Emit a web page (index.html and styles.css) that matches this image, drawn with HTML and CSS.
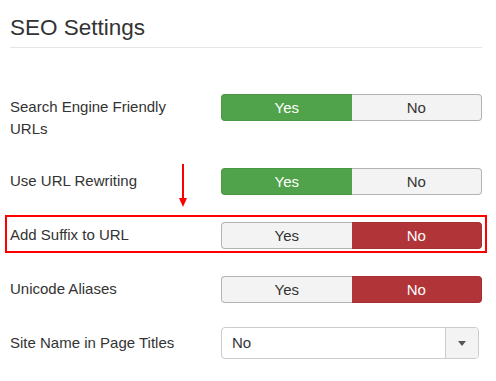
FILE: index.html
```html
<!DOCTYPE html>
<html lang="en">
<head>
    <meta charset="UTF-8">
    <title>SEO Settings</title>
    <link rel="stylesheet" href="styles.css">
</head>
<body>
    <div class="container">
        <h2 class="title">SEO Settings</h2>

        <div class="row row-first">
            <div class="label">Search Engine Friendly URLs</div>
            <div class="toggle">
                <span class="seg yes active">Yes</span>
                <span class="seg no">No</span>
            </div>
        </div>

        <div class="row">
            <div class="label">Use URL Rewriting</div>
            <div class="toggle">
                <span class="seg yes active">Yes</span>
                <span class="seg no">No</span>
            </div>
        </div>

        <!-- highlighted row -->
        <div class="row marked">
            <svg class="arrow" width="10" height="44" viewBox="0 0 10 44">
                <rect x="4" y="0" width="2" height="36" fill="#ff0000"/>
                <polygon points="1,34 9,34 5,43" fill="#ff0000"/>
            </svg>
            <div class="mark-box"></div>
            <div class="label">Add Suffix to URL</div>
            <div class="toggle">
                <span class="seg yes">Yes</span>
                <span class="seg no active">No</span>
            </div>
        </div>

        <div class="row">
            <div class="label">Unicode Aliases</div>
            <div class="toggle">
                <span class="seg yes">Yes</span>
                <span class="seg no active">No</span>
            </div>
        </div>

        <div class="row row-select">
            <div class="label">Site Name in Page Titles</div>
            <div class="select">
                <span class="select-value">No</span>
                <span class="select-btn"><span class="caret"></span></span>
            </div>
        </div>
    </div>
</body>
</html>
```

FILE: styles.css
```css
/* base */
body {
    margin: 0;
    padding: 14px 14px 0 10px;
    font-family: "Liberation Sans", Arial, sans-serif;
    color: #333;
    background: #fff;
}

.container {
    width: 472px;
}

.title {
    margin: 0 0 46px;
    padding: 0 0 6px;
    font-size: 22.5px;
    line-height: 27px;
    font-weight: normal;
    color: #333;
    border-bottom: 1px solid #e5e5e5;
}

/* form rows */
.row {
    display: flex;
    align-items: flex-start;
    margin-bottom: 27px;
}

.row-first {
    margin-bottom: 28px;
}

.row-select {
    margin-top: -3px;
}

.label {
    width: 180px;
    margin-right: 31px;
    padding-top: 2px;
    font-size: 15px;
    line-height: 22px;
}

.row-select .label {
    padding-top: 5px;
}

/* yes / no buttons */
.toggle {
    display: flex;
    width: 261px;
    height: 27px;
    margin-left: auto;
}

.seg {
    flex: 1;
    display: flex;
    align-items: center;
    justify-content: center;
    font-size: 15px;
    color: #333;
    background: #f3f3f3;
    border: 1px solid #b3b3b3;
}

.seg.yes {
    border-radius: 4px 0 0 4px;
    border-right: none;
}

.seg.no {
    border-radius: 0 4px 4px 0;
    border-left: none;
}

.seg.yes.active {
    background: #51a34b;
    border-color: #4a9744;
    color: #fff;
}

.seg.no.active {
    background: #b13438;
    border-color: #a52f33;
    color: #fff;
}

/* dropdown */
.select {
    display: flex;
    width: 258px;
    height: 32px;
    margin-right: 3px;
    margin-left: auto;
    border: 1px solid #ccc;
    border-radius: 4px;
    box-sizing: border-box;
    background: #fff;
}

.select-value {
    flex: 1;
    padding-left: 10px;
    font-size: 15px;
    line-height: 30px;
}

.select-btn {
    width: 32px;
    display: flex;
    align-items: center;
    justify-content: center;
    background: #f3f3f3;
    border-left: 1px solid #ccc;
    border-radius: 0 3px 3px 0;
}

.caret {
    width: 0;
    height: 0;
    border-left: 4px solid transparent;
    border-right: 4px solid transparent;
    border-top: 5px solid #555;
}

/* annotation */
.marked {
    position: relative;
}

.mark-box {
    position: absolute;
    top: -7px;
    left: -5px;
    right: -5px;
    bottom: -4px;
    border: 2px solid #ff0000;
}

.arrow {
    position: absolute;
    top: -58px;
    left: 168px;
}
```
